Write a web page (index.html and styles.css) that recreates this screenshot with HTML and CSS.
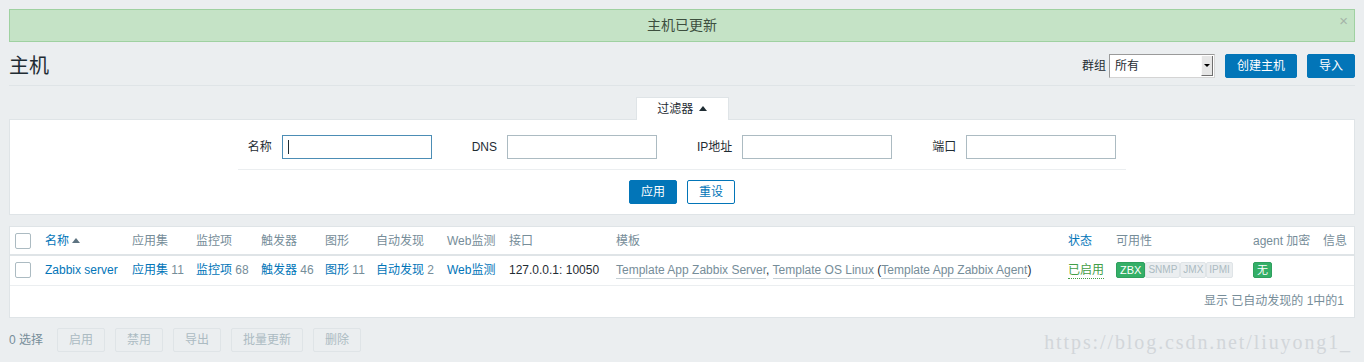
FILE: index.html
```html
<!DOCTYPE html>
<html lang="zh-CN">
<head>
    <meta charset="UTF-8">
    <title>主机</title>
    <link rel="stylesheet" href="styles.css">
</head>
<body>
    <div class="page">
        <!-- 消息 -->
        <div class="msg-good">主机已更新<span class="msg-close">×</span></div>

        <!-- 标题 -->
        <div class="header">
            <h1>主机</h1>
            <div class="header-controls">
                <span class="group-label">群组</span>
                <div class="select">所有<span class="select-arrow"></span></div>
                <button class="btn">创建主机</button>
                <button class="btn">导入</button>
            </div>
        </div>

        <!-- 过滤器 -->
        <div class="filter">
            <div class="filter-tabs">
                <span class="filter-tab">过滤器 <span class="arrow-up"></span></span>
            </div>
            <div class="filter-box">
                <div class="filter-fields">
                    <div class="field">
                        <label>名称</label>
                        <span class="input-wrap focused"><input type="text"></span>
                    </div>
                    <div class="field">
                        <label>DNS</label>
                        <span class="input-wrap"><input type="text"></span>
                    </div>
                    <div class="field">
                        <label>IP地址</label>
                        <span class="input-wrap"><input type="text"></span>
                    </div>
                    <div class="field">
                        <label>端口</label>
                        <span class="input-wrap"><input type="text"></span>
                    </div>
                </div>
                <div class="filter-buttons">
                    <button class="btn">应用</button>
                    <button class="btn btn-alt">重设</button>
                </div>
            </div>
        </div>

        <!-- 主机列表 -->
        <div class="table-wrap">
            <table class="list-table">
                <colgroup>
                    <col class="c-check"><col class="c-name"><col class="c-apps"><col class="c-items">
                    <col class="c-triggers"><col class="c-graphs"><col class="c-discovery"><col class="c-web">
                    <col class="c-iface"><col class="c-templates"><col class="c-status"><col class="c-avail">
                    <col class="c-encrypt"><col class="c-info">
                </colgroup>
                <thead>
                    <tr>
                        <th><span class="checkbox"></span></th>
                        <th class="sortable">名称 <span class="sort-up"></span></th>
                        <th>应用集</th>
                        <th>监控项</th>
                        <th>触发器</th>
                        <th>图形</th>
                        <th>自动发现</th>
                        <th>Web监测</th>
                        <th>接口</th>
                        <th>模板</th>
                        <th class="sortable">状态</th>
                        <th>可用性</th>
                        <th>agent 加密</th>
                        <th>信息</th>
                    </tr>
                </thead>
                <tbody>
                    <tr>
                        <td><span class="checkbox"></span></td>
                        <td><a>Zabbix server</a></td>
                        <td><a>应用集</a> <sup>11</sup></td>
                        <td><a>监控项</a> <sup>68</sup></td>
                        <td><a>触发器</a> <sup>46</sup></td>
                        <td><a>图形</a> <sup>11</sup></td>
                        <td><a>自动发现</a> <sup>2</sup></td>
                        <td><a>Web监测</a></td>
                        <td>127.0.0.1: 10050</td>
                        <td><a class="tpl">Template App Zabbix Server</a>, <a class="tpl">Template OS Linux</a> (<a class="tpl">Template App Zabbix Agent</a>)</td>
                        <td><span class="status-on">已启用</span></td>
                        <td>
                            <span class="avail"><span class="badge green">ZBX</span><span class="badge grey">SNMP</span><span class="badge grey">JMX</span><span class="badge grey">IPMI</span></span>
                        </td>
                        <td><span class="badge green">无</span></td>
                        <td></td>
                    </tr>
                </tbody>
                <tfoot>
                    <tr>
                        <td colspan="14">显示 已自动发现的 1中的1</td>
                    </tr>
                </tfoot>
            </table>
        </div>

        <!-- 批量操作 -->
        <div class="action-bar">
            <span class="selected-count">0 选择</span>
            <button class="btn" disabled>启用</button>
            <button class="btn" disabled>禁用</button>
            <button class="btn" disabled>导出</button>
            <button class="btn" disabled>批量更新</button>
            <button class="btn" disabled>删除</button>
        </div>

        <div class="watermark">https://blog.csdn.net/liuyong1_</div>
    </div>
</body>
</html>
```

FILE: styles.css
```css
* {
    margin: 0;
    padding: 0;
    box-sizing: border-box;
}

body {
    background: #ebeef0;
    color: #1f2c33;
    font-family: "Liberation Sans", Arial, "Noto Sans CJK SC", sans-serif;
    font-size: 12px;
    line-height: 14px;
}

.page {
    position: relative;
    padding: 9px 9px 0;
    height: 362px;
}

a {
    color: #0275b8;
}

/* 消息 */
.msg-good {
    position: relative;
    height: 33px;
    line-height: 31px;
    background: #c5e3c6;
    border: 1px solid #9fd1a1;
    text-align: center;
    font-size: 14px;
    color: #3d4f3e;
}

.msg-close {
    position: absolute;
    right: 6px;
    top: 5px;
    line-height: 12px;
    font-size: 15px;
    color: #a4b4a8;
}

/* 标题 */
.header {
    display: flex;
    justify-content: space-between;
    align-items: center;
    padding: 12px 0 7px;
    border-bottom: 1px solid #dfe4e7;
}

.header h1 {
    font-size: 20px;
    font-weight: normal;
    line-height: 24px;
    height: 24px;
}

.header-controls {
    display: flex;
    align-items: center;
}

.group-label {
    margin-right: 3px;
}

.select {
    position: relative;
    width: 106px;
    height: 24px;
    line-height: 22px;
    padding-left: 5px;
    margin-right: 10px;
    background: #fff;
    border: 1px solid #9a9a9a;
    border-right-color: #d4d4d4;
    border-bottom-color: #d4d4d4;
}

.select-arrow {
    position: absolute;
    right: 1px;
    top: 1px;
    width: 12px;
    height: 20px;
    background: #e6e6e6;
    border-right: 1px solid #6f6f6f;
    border-bottom: 1px solid #6f6f6f;
    border-left: 1px solid #fafafa;
}

.select-arrow::after {
    content: "";
    position: absolute;
    left: 2px;
    top: 8px;
    border-left: 3px solid transparent;
    border-right: 3px solid transparent;
    border-top: 3px solid #000;
}

.btn {
    height: 24px;
    padding: 0 11px;
    background: #0275b8;
    border: 1px solid #0275b8;
    border-radius: 2px;
    color: #fff;
    font-family: inherit;
    font-size: 12px;
    line-height: 22px;
}

.header-controls .btn + .btn {
    margin-left: 10px;
}

.btn-alt {
    background: #fff;
    color: #0275b8;
}

.btn[disabled] {
    background: #ebeef0;
    border-color: #dfe4e7;
    color: #acbbc2;
}

/* 过滤器 */
.filter {
    margin-top: 11px;
}

.filter-tabs {
    display: flex;
    justify-content: center;
}

.filter-tab {
    position: relative;
    width: 93px;
    height: 23px;
    margin-bottom: -1px;
    line-height: 22px;
    text-align: center;
    background: #fff;
    border: 1px solid #dfe4e7;
    border-bottom: none;
}

.arrow-up {
    display: inline-block;
    margin-left: 2px;
    vertical-align: 2px;
    border-left: 4px solid transparent;
    border-right: 4px solid transparent;
    border-bottom: 5px solid #1f2c33;
}

.filter-box {
    display: flex;
    flex-direction: column;
    align-items: center;
    padding: 15px 0 10px;
    background: #fff;
    border: 1px solid #dfe4e7;
}

.filter-fields {
    display: flex;
    gap: 40px;
    padding: 0 10px 10px;
    border-bottom: 1px solid #ebeef0;
}

.field {
    display: flex;
    align-items: center;
    gap: 10px;
}

.input-wrap {
    position: relative;
    display: block;
}

.input-wrap input {
    display: block;
    width: 150px;
    height: 24px;
    border: 1px solid #acbbc2;
    background: #fff;
    outline: none;
}

.input-wrap.focused input {
    border-color: #4c8db5;
}

.input-wrap.focused::after {
    content: "";
    position: absolute;
    left: 6px;
    top: 5px;
    width: 1px;
    height: 14px;
    background: #1f2c33;
}

.filter-buttons {
    display: flex;
    gap: 10px;
    margin-top: 10px;
}

/* 主机列表 */
.table-wrap {
    margin-top: 11px;
    background: #fff;
    border: 1px solid #dfe4e7;
}

.list-table {
    width: 1344px;
    table-layout: fixed;
    border-collapse: collapse;
}

.c-check { width: 30px; }
.c-name { width: 87px; }
.c-apps { width: 64px; }
.c-items { width: 65px; }
.c-triggers { width: 64px; }
.c-graphs { width: 51px; }
.c-discovery { width: 71px; }
.c-web { width: 62px; }
.c-iface { width: 107px; }
.c-templates { width: 452px; }
.c-status { width: 48px; }
.c-avail { width: 137px; }
.c-encrypt { width: 70px; }
.c-info { width: 36px; }

.list-table th,
.list-table td {
    padding: 0 5px;
    text-align: left;
    white-space: nowrap;
    vertical-align: middle;
}

.list-table th {
    height: 28px;
    font-weight: normal;
    color: #768d99;
    border-bottom: 2px solid #dfe4e7;
}

.list-table th.sortable {
    color: #0275b8;
}

.sort-up {
    display: inline-block;
    vertical-align: 2px;
    border-left: 4px solid transparent;
    border-right: 4px solid transparent;
    border-bottom: 5px solid #5d7381;
}

.list-table tbody td {
    height: 30px;
    border-bottom: 1px solid #ebeef0;
}

.list-table sup {
    vertical-align: baseline;
    font-size: 12px;
    color: #768d99;
}

.checkbox {
    display: block;
    width: 16px;
    height: 16px;
    background: #fff;
    border: 1px solid #acbbc2;
    border-radius: 2px;
}

.tpl {
    color: #768d99;
    border-bottom: 1px solid #c6d0d5;
    padding-bottom: 1px;
}

.status-on {
    color: #429e47;
    border-bottom: 1px dotted #429e47;
    padding-bottom: 1px;
}

.avail {
    display: inline-flex;
}

.badge {
    display: inline-block;
    height: 16px;
    padding: 0 2px;
    font-size: 10px;
    line-height: 14px;
    border: 1px solid;
    border-radius: 2px;
}

.badge.green {
    padding: 0 3px;
    background: #34af67;
    border-color: #2f9f5e;
    color: #fff;
    font-size: 11px;
}

.badge.grey {
    background: #ebeef0;
    border-color: #dfe4e7;
    color: #acbbc2;
}

.list-table tfoot td {
    height: 32px;
    padding-right: 10px;
    text-align: right;
    color: #768d99;
}

/* 批量操作 */
.action-bar {
    display: flex;
    align-items: center;
    gap: 10px;
    margin-top: 10px;
}

.selected-count {
    margin-right: 4px;
    color: #768d99;
}

.watermark {
    position: absolute;
    right: 12px;
    top: 330px;
    font-family: "Liberation Serif", serif;
    font-size: 20px;
    letter-spacing: 1.9px;
    line-height: 24px;
    color: #d2d6da;
}
```
